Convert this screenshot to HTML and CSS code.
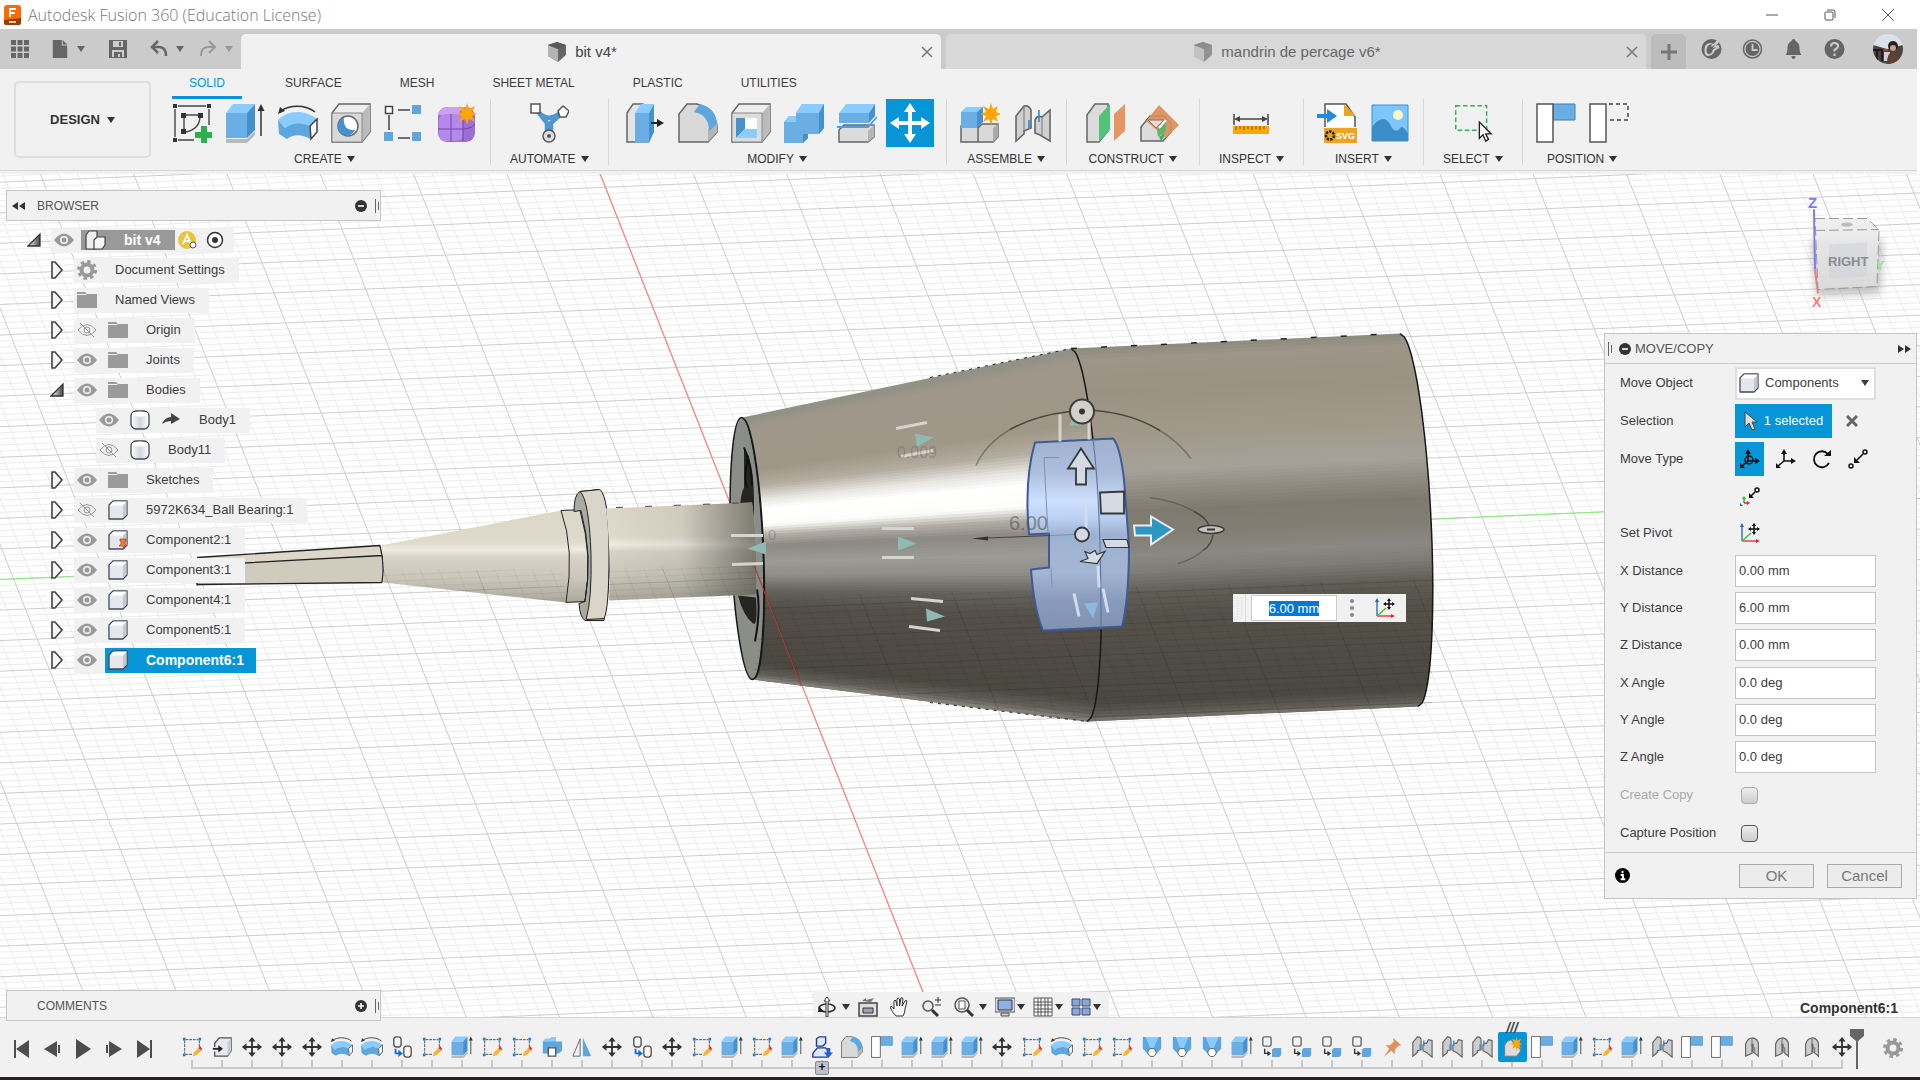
FILE: index.html
```html
<!DOCTYPE html>
<html lang="en">
<head>
<meta charset="utf-8">
<title>Autodesk Fusion 360 (Education License)</title>
<link rel="stylesheet" href="styles.css">
</head>
<body>
<svg class="defs" aria-hidden="true">
  <defs>
    <linearGradient id="g-exp" x1="0" y1="0" x2="1" y2="0"><stop offset=".2" stop-color="#ddd"/><stop offset="1" stop-color="#444"/></linearGradient>
    <linearGradient id="g-cyl" x1="0" y1="0" x2="1" y2="0"><stop offset="0" stop-color="#fff"/><stop offset=".5" stop-color="#d3d5dc"/><stop offset="1" stop-color="#fff"/></linearGradient>
  </defs>
  <symbol id="caret" viewBox="0 0 8 8"><path d="M0 1h8L4 7z" fill="currentColor"/></symbol>
  <symbol id="close" viewBox="0 0 12 12"><path d="M1 1l10 10M11 1L1 11" stroke="currentColor" stroke-width="1.5" fill="none"/></symbol>
  <symbol id="doccube" viewBox="0 0 20 20"><path d="M10 0l9 3v10l-8 7L1 14V3z" fill="#666"/><path d="M1 3l10 4v13L1 14z" fill="#b4b4b4"/><path d="M1 3l9-3 9 3-8 4z" fill="#5a5a5a"/></symbol>

  <symbol id="sketch" viewBox="0 0 40 40"><g fill="none" stroke="#444" stroke-width="1.4"><path d="M6 3h28M3 6v28M37 6v16M6 37h16"/><path d="M14 12h12M12 14v13M28 13c0 8-5 14-14 16"/></g><g fill="#333"><path d="M1 1h4v4H1zM35 1h4v4h-4zM1 35h4v4H1zM9 10h5v5H9zM26 10h5v5h-5zM9 26h5v5H9z"/></g><path d="M29 23h6v6h6v6h-6v6h-6v-6h-6v-6h6z" fill="#2bb14c"/></symbol>
  <symbol id="extrude" viewBox="0 0 40 40"><path d="M1 36h21l8-8v4l-8 8H1z" fill="#b9b9b9"/><path d="M1 10h21v25H1z" fill="#6aaee3"/><path d="M1 10l7-9h22l-8 9z" fill="#8accff"/><path d="M22 10l8-9v26l-8 8z" fill="#4591cf"/><path d="M36 33V6" stroke="#333" stroke-width="1.5"/><path d="M32.500 8L36 1l3.500 7z" fill="#333"/></symbol>
  <symbol id="revolve" viewBox="0 0 40 40"><path d="M3 8c8-6 24-7 34 1" fill="none" stroke="#333" stroke-width="1.600"/><path d="M0 11l2-7 5 4z" fill="#333"/><path d="M0 17c9-10 27-11 39-1l-7 7c-8-4-18-4-25 2z" fill="#8accff"/><path d="M0 17l7 8c7-6 17-6 25-2v13c-8-5-17-5-23 0L1 31z" fill="#5ea6de"/><path d="M32 23l7-7v13l-6 7z" fill="#fff" stroke="#444" stroke-width="1.500"/></symbol>
  <symbol id="hole" viewBox="0 0 40 40"><path d="M1 10L8 1h31v28l-8 10H1z" fill="#eee" stroke="#666" stroke-width="1.500"/><path d="M31 10l8-9v28l-8 10z" fill="#bbb"/><path d="M1 10h30v29H1z" fill="#d9d9d9" stroke="#888"/><circle cx="17" cy="23" r="10" fill="#fff" stroke="#666" stroke-width="1.500"/><path d="M13 15a9 9 0 1 0 11 12c-8 1-12-4-11-12z" fill="#4591cf"/></symbol>
  <symbol id="pattern" viewBox="0 0 40 40"><path d="M14 7h12M5 12v15M14 35h12" stroke="#444" stroke-width="1.500"/><path d="M1.500 3.500h7v7h-7z" fill="#fff" stroke="#444" stroke-width="1.500"/><path d="M28 2h9v9h-9zM28 29h9v9h-9zM0 29h9v9H0z" fill="#5ea6de"/></symbol>
  <symbol id="form" viewBox="0 0 40 40"><rect x="1" y="4" width="37" height="35" rx="9" fill="#9b6fd6"/><path d="M1 12q2-8 11-8h18q-7 1-8 8z" fill="#c9a0f5"/><rect x="2" y="11" width="24" height="27" rx="6" fill="#b588ec"/><path d="M14 11v28M1 26h25q8 0 12-5M26 12v26" stroke="#6f46a8" fill="none"/><path d="M30 0l2 6 6-3-3 6 5 2-5 2 3 6-6-3-2 6-2-6-6 3 3-6-6-2 6-2-3-6 6 3z" fill="#fba50a"/></symbol>
  <symbol id="automate" viewBox="0 0 40 40"><path d="M7 6l11 14v13h4V20L34 9M9 9q11 11 22 1" fill="none" stroke="#4f97d2" stroke-width="4.500"/><path d="M2 1h9v9H2z" fill="#fff" stroke="#555" stroke-width="1.500"/><path d="M34 3l6 5-3 6h-6l-2-6z" fill="#fff" stroke="#555" stroke-width="1.500"/><circle cx="20" cy="33" r="6" fill="#ddd" stroke="#555" stroke-width="1.500"/><circle cx="20" cy="33" r="2" fill="#555"/></symbol>
  <symbol id="presspull" viewBox="0 0 40 40"><path d="M2 10l6-9h10v38H2z" fill="#e4e4e4" stroke="#666" stroke-width="1.500"/><path d="M10 10h14v30H10z" fill="#6aaee3"/><path d="M10 10l6-9h13l-5 9z" fill="#8accff"/><path d="M24 10l5-9v28l-5 11z" fill="#4591cf"/><path d="M26 20h10" stroke="#222" stroke-width="2"/><path d="M32 16l7 4-7 4z" fill="#222"/></symbol>
  <symbol id="fillet" viewBox="0 0 40 40"><path d="M1 39V11L9 1h10q18 6 20 22v6l-9 10z" fill="#d9d9d9" stroke="#666" stroke-width="1.500"/><path d="M30 26l9-9v12l-9 10z" fill="#b5b5b5"/><path d="M16 9l6-8q16 4 17 20l-8 7Q31 12 16 9z" fill="#5ea6de"/></symbol>
  <symbol id="shell" viewBox="0 0 40 40"><path d="M1 10L8 1h31v28l-8 10H1z" fill="#eee" stroke="#666" stroke-width="1.500"/><path d="M31 10l8-9v28l-8 10z" fill="#bbb"/><path d="M1 10h30v29H1z" fill="#dcdcdc" stroke="#888"/><path d="M5 15h21v20H5z" fill="#fff"/><path d="M5 15h9v11l-9 9z" fill="#4591cf"/><path d="M5 35l9-9h12v9z" fill="#8accff"/></symbol>
  <symbol id="combine" viewBox="0 0 40 40"><path d="M12 10l6-9h22v24l-5 6H24v4l-5 5H0V19l5-6h7z" fill="#6aaee3"/><path d="M12 10l6-9h22l-5 9zM0 19l5-6h7v6z" fill="#8accff"/><path d="M35 10l5-9v24l-5 6zM19 40v-9h5v4z" fill="#4591cf"/></symbol>
  <symbol id="split" viewBox="0 0 40 40"><path d="M2 27l5-5h30v12l-6 5H2z" fill="#dcdcdc" stroke="#666" stroke-width="1.500"/><path d="M31 28l6-6v12l-6 5z" fill="#b5b5b5"/><path d="M2 10h30v10H2z" fill="#6aaee3"/><path d="M2 10l7-9h29l-6 9z" fill="#8accff"/><path d="M32 10l6-9v12l-6 7z" fill="#4591cf"/><path d="M0 24h31l9-10" stroke="#4aa0e8" stroke-width="1.800" fill="none"/></symbol>
  <symbol id="movew" viewBox="0 0 48 48"><path d="M24 10v28M10 24h28" stroke="#fff" stroke-width="4"/><path d="M24 4l6 9H18zM24 44l6-9H18zM4 24l9-6v12zM44 24l-9-6v12z" fill="#fff"/></symbol>
  <symbol id="newcomp" viewBox="0 0 40 40"><path d="M1 23h17v16H1zM18 25l4-4h16v13l-5 5H18z" fill="#d9d9d9" stroke="#666" stroke-width="1.500"/><path d="M33 25l5-4v13l-5 5z" fill="#aaa"/><path d="M1 9h16v16H1z" fill="#6aaee3"/><path d="M1 9l5-5h17l-6 5z" fill="#8accff"/><path d="M17 9l6-5v15l-6 6z" fill="#4591cf"/><path d="M31 0l2 6 5-3-2 6 5 2-5 2 2 6-5-3-2 6-2-6-6 3 3-6-6-2 6-2-3-6 6 3z" fill="#fba50a"/></symbol>
  <symbol id="joint" viewBox="0 0 40 40"><path d="M3 13l8-10q5-1 7 4v18l-7 3v3l-8 7zM22 17q2-5 7-3l8-7v31l-10-6-5-2z" fill="#d0d0d0" stroke="#666" stroke-width="1.600"/><path d="M11 3v25M29 14v18" stroke="#777"/><path d="M16 17v9M26 7v12" stroke="#2b8de0" stroke-width="1.600"/></symbol>
  <symbol id="planes" viewBox="0 0 40 40"><path d="M1 12L9 1h13v27l-9 11H1z" fill="#dcdcdc" stroke="#666" stroke-width="1.500"/><path d="M13 13L24 1v26L13 39z" fill="#55c27a"/><path d="M28 11L39 1v27L28 38z" fill="#e59763"/></symbol>
  <symbol id="planeang" viewBox="0 0 40 40"><path d="M2 38V24l9-11h14l7 8v8l-8 9z" fill="#dcdcdc" stroke="#666" stroke-width="1.500"/><path d="M20 2l20 20-13 13L7 18z" fill="#dd8d5b" opacity=".9"/><path d="M9 17h16l-8 8z" fill="#f3d9c8" stroke="#777"/><path d="M18 26l9-10v12l-8 6z" fill="#62b36a"/><path d="M20 25l7-8" stroke="#fff" stroke-width="2"/><path d="M20 34l5-4v4l-3 4z" fill="#3cb55e"/></symbol>
  <symbol id="measure" viewBox="0 0 40 40"><path d="M3 11v11M37 11v11M5 16h30" stroke="#444" stroke-width="1.500"/><path d="M3 16l6-3v6zM37 16l-6-3v6z" fill="#444"/><path d="M2 23h36v8H2z" fill="#fba50a"/><path d="M5 23v4M9 23v3M13 23v4M17 23v3M21 23v4M25 23v3M29 23v4M33 23v3" stroke="#7a5a10"/></symbol>
  <symbol id="image" viewBox="0 0 40 40"><path d="M2 2h36v36H2z" fill="#7cc6fb" stroke="#3a8fd0"/><path d="M2 24q6-8 11-8t9 9q4 6 9-1 4 0 7 7v7H2z" fill="#3b8dc9"/><circle cx="28" cy="12" r="5" fill="#fdf8c0"/></symbol>
  <symbol id="select" viewBox="0 0 44 40"><path d="M3 1h34v27H3z" fill="none" stroke="#2fb15b" stroke-width="1.600" stroke-dasharray="5 3"/><path d="M29 19v18l4-4 3 7 3-2-3-6h6z" fill="#fff" stroke="#222" stroke-width="1.500"/></symbol>
  <symbol id="position" viewBox="0 0 40 40"><path d="M17 1h22v16H17z" fill="#69ade2" stroke="#3f7fb5"/><path d="M1 1h16v38H1z" fill="#fff" stroke="#555" stroke-width="1.500"/></symbol>
  <symbol id="revert" viewBox="0 0 40 40"><path d="M20 1h19v16H20" fill="none" stroke="#444" stroke-width="1.500" stroke-dasharray="4 3"/><path d="M1 1h16v38H1z" fill="#fff" stroke="#555" stroke-width="1.500"/></symbol>

  <symbol id="t-sketch" viewBox="0 0 24 24"><path d="M5 4h14M4 5v14M20 5v9M5 20h8" stroke="#444" fill="none" stroke-dasharray="3 1"/><path d="M2 2h3v3H2zM19 2h3v3h-3zM2 19h3v3H2z" fill="#1b84dd"/><path d="M13 22l1-4 5-5 3 3-5 5z" fill="#f9b633"/><path d="M19 13l2-2 2 3-1 2z" fill="#e33"/></symbol>
  <symbol id="t-import" viewBox="0 0 24 24"><path d="M4 12V8l5-6h13v14l-4 6H4v-5" fill="#e8e9ee" stroke="#555" stroke-width="1.500"/><path d="M18 7l4-5v14l-4 6z" fill="#c9cbd4"/><path d="M2 14h7" stroke="#222" stroke-width="2"/><path d="M8 10l5 4-5 4z" fill="#222"/></symbol>
  <symbol id="t-move" viewBox="0 0 24 24"><path d="M12 4v16M4 12h16" stroke="#333" stroke-width="2"/><path d="M12 1l4 5H8zM12 23l4-5H8zM1 12l5-4v8zM23 12l-5-4v8z" fill="#333"/></symbol>
  <symbol id="t-link" viewBox="0 0 24 24"><rect x="3" y="1" width="8" height="11" rx="3" fill="#f4f4f4" stroke="#555" stroke-width="1.500"/><rect x="14" y="11" width="8" height="12" rx="3" fill="#f4f4f4" stroke="#555" stroke-width="1.500"/><path d="M5 14v5h4" stroke="#1b6fd0" stroke-width="2" fill="none"/><path d="M8 15l5 4-5 4z" fill="#1b6fd0"/></symbol>
  <symbol id="t-mirror" viewBox="0 0 24 24"><path d="M10 3v19H2z" fill="#eee" stroke="#666"/><path d="M13 2v20h9z" fill="#5ea6de"/></symbol>
  <symbol id="t-combine" viewBox="0 0 24 24"><path d="M2 6l3-3h5l2-2h4v5h7v10l-4 3H2z" fill="#5ea6de"/><path d="M2 6l3-3h5l2-2h4v5z" fill="#8accff"/><path d="M8 13h8v9H8z" fill="#fff" stroke="#555" stroke-width="1.500"/></symbol>
  <symbol id="t-insert" viewBox="0 0 24 24"><path d="M6 3l3-2h7v7l-3 3H6zM2 19l5-6h9l5 6-3 4H2z" fill="#dfe6f8" stroke="#1e3e96" stroke-width="1.500"/><path d="M17 13v5h-3l5 6 5-6h-3v-5z" fill="#2a5ed0"/></symbol>
  <symbol id="t-loft" viewBox="0 0 24 24"><path d="M2 1h20v13l-6 6H8l-6-6z" fill="#5ea6de"/><path d="M5 1h14l-5 12h-4z" fill="#8accff"/><circle cx="12" cy="18" r="4.500" fill="#fff" stroke="#555"/></symbol>
  <symbol id="t-comp" viewBox="0 0 24 24"><rect x="2" y="1" width="9" height="10" rx="2" fill="#f4f4f4" stroke="#666" stroke-width="1.500"/><path d="M4 14v5h4" stroke="#333" stroke-width="1.500" fill="none"/><path d="M7 16l4 3-4 3z" fill="#333"/><path d="M12 15l2-2h8v8l-2 2h-8z" fill="#5ea6de"/></symbol>
  <symbol id="t-pin" viewBox="0 0 24 24"><path d="M13 2l9 8-3 1-4 4 0 5-4-4-8 7 6-9-4-4h5l4-4z" fill="#e0905a"/></symbol>
  <symbol id="t-joint" viewBox="0 0 24 24"><path d="M2 22V7l5-6q4 0 4 4v10l-4 1v2zM13 10q1-3 4-2l2-4 4 1v18l-6-5-4-2z" fill="#ccc" stroke="#666" stroke-width="1.300"/><path d="M10 9v6M14 5v6" stroke="#2b8de0" stroke-width="1.500"/></symbol>
  <symbol id="t-rigid" viewBox="0 0 24 24"><path d="M5 22V9q2-7 8-7 5 1 6 6v14l-6-5V9h-1v10z" fill="#ccc" stroke="#666" stroke-width="1.300"/><path d="M12 3v8l3 2v5" stroke="#666" fill="none"/></symbol>
  <symbol id="t-new" viewBox="0 0 24 24"><path d="M4 22V10q2-5 7-6l5 7 5 3v3l-4 5z" fill="#ddd" stroke="#777"/><path d="M17 1l1 4 4-2-2 4 3 2-3 1 2 4-4-2-1 4-1-4-4 2 2-4-4-1 4-2-2-4 4 2z" fill="#fba50a"/></symbol>

  <symbol id="eye" viewBox="0 0 20 20"><path d="M0 10q10-13 20 0-10 13-20 0z" fill="#9a9a9a"/><circle cx="10" cy="10" r="4" fill="#f1f1f1"/><circle cx="10" cy="10" r="2.500" fill="#9a9a9a"/></symbol>
  <symbol id="eyeoff" viewBox="0 0 20 20"><path d="M1 10q9-11 18 0-9 11-18 0z" fill="none" stroke="#999"/><circle cx="10" cy="10" r="3" fill="none" stroke="#999"/><path d="M3 3l14 14" stroke="#999"/></symbol>
  <symbol id="folder" viewBox="0 0 20 20"><path d="M0 2h8l2 2H0zM0 5h9l1-1h10v14H0z" fill="#9a9a9a"/></symbol>
  <symbol id="gear" viewBox="0 0 20 20"><circle cx="10" cy="10" r="8.500" fill="none" stroke="#999" stroke-width="3" stroke-dasharray="3.400 3.275"/><circle cx="10" cy="10" r="5.500" fill="none" stroke="#999" stroke-width="4"/></symbol>
  <symbol id="box" viewBox="0 0 20 20"><path d="M1 5l4-4h14v14l-4 4H1z" fill="#e6e7ec" stroke="#444b58" stroke-width="1.300" stroke-linejoin="round"/><path d="M1.700 5.500h13L19 1.500H5.500z" fill="#fff"/><path d="M15 5.500l3.500-3.500v12.500L15 18z" fill="#c6c8d0"/></symbol>
  <symbol id="assembly" viewBox="0 0 22 20"><path d="M2 5l3-4h8v6l-2 3v9H2z" fill="#eee" stroke="#444" stroke-width="1.200"/><path d="M10 10l3-3h8v8l-3 4h-8z" fill="#f6f6f6" stroke="#444" stroke-width="1.200"/></symbol>
  <symbol id="cyl" viewBox="0 0 20 20"><rect x="1" y="1" width="18" height="18" rx="5" fill="url(#g-cyl)" stroke="#444b58" stroke-width="1.300"/><path d="M2 5q8 3 16 0V3q-8-3-16 0z" fill="#fff"/></symbol>
  <symbol id="expand" viewBox="0 0 14 18"><path d="M2 1v16h3l7-8-7-8z" fill="#f6f6f6" stroke="#444" stroke-width="1.600"/></symbol>
  <symbol id="open" viewBox="0 0 14 18"><path d="M13 3v12H1z" fill="url(#g-exp)" stroke="#333" stroke-width="1.300"/></symbol>
  <symbol id="minus" viewBox="0 0 12 12"><circle cx="6" cy="6" r="6" fill="#333"/><path d="M3 6h6" stroke="#fff" stroke-width="1.600"/></symbol>
  <symbol id="plus" viewBox="0 0 12 12"><circle cx="6" cy="6" r="6" fill="#333"/><path d="M3 6h6M6 3v6" stroke="#fff" stroke-width="1.600"/></symbol>
  <symbol id="rew" viewBox="0 0 14 10"><path d="M7 1v8L1 5zM14 1v8L8 5z" fill="#333"/></symbol>
  <symbol id="ffw" viewBox="0 0 14 10"><path d="M0 1v8l6-4zM7 1v8l6-4z" fill="#333"/></symbol>
  <symbol id="grip" viewBox="0 0 6 14"><path d="M2.500 0v14" stroke="#666"/><path d="M5.500 3v8" stroke="#666"/></symbol>
  <symbol id="pivot" viewBox="0 0 20 20"><path d="M2 18V2" stroke="#1d63b8" stroke-width="1.300"/><path d="M0 4l2-4 2 4z" fill="#1d63b8"/><path d="M2 18h16" stroke="#e22" stroke-width="1.300"/><path d="M16 16l4 2-4 2z" fill="#e22"/><path d="M2 18l9-8" stroke="#3c3" stroke-width="1.500"/><path d="M14 1v10M9 6h10" stroke="#111" stroke-width="1.500"/><path d="M14 0l2 3h-4zM14 12l2-3h-4zM8 6l3-2v4zM20 6l-3-2v4z" fill="#111"/></symbol>
  <symbol id="triad" viewBox="0 0 20 20"><path d="M8 12V3M8 12h9M8 12l-6 5" stroke="#111" stroke-width="1.600"/><path d="M5 5l3-5 3 5zM15 9l5 3-5 3zM0 14v5h5z" fill="#111"/></symbol>
</svg>

<header class="titlebar">
  <svg class="applogo" viewBox="0 0 18 20"><rect width="17" height="20" rx="3" fill="#ff6b00"/><path d="M0 15l17-2v5q0 2-2 2H2q-2 0-2-2z" fill="#9a3c00"/><path d="M6 12V4h6M6 8h5" fill="none" stroke="#fff" stroke-width="2"/><path d="M5 17h7" stroke="#e8c8b0" stroke-width="2"/></svg>
  <h1 class="apptitle">Autodesk Fusion 360 (Education License)</h1>
  <div class="wincontrols">
    <button aria-label="Minimize"><svg viewBox="0 0 12 12"><path d="M0 6h12" stroke="#555"/></svg></button>
    <button aria-label="Restore"><svg viewBox="0 0 12 12"><rect x="1" y="3" width="8" height="8" rx="1" fill="none" stroke="#555"/><path d="M3 1h6q2 0 2 2v6" fill="none" stroke="#555"/></svg></button>
    <button aria-label="Close"><svg viewBox="0 0 12 12"><path d="M0 0l12 12M12 0L0 12" stroke="#555"/></svg></button>
  </div>
</header>

<div class="tabbar">
  <div class="quick">
    <button class="q-grid" aria-label="Data panel"><svg viewBox="0 0 18 18"><path d="M0 0h5v5H0zM6.500 0h5v5h-5zM13 0h5v5h-5zM0 6.500h5v5H0zM6.500 6.500h5v5h-5zM13 6.500h5v5h-5zM0 13h5v5H0zM6.500 13h5v5h-5zM13 13h5v5h-5z" fill="#666"/></svg></button>
    <button class="q-file" aria-label="File"><svg viewBox="0 0 18 20"><path d="M1 0h10v6h6v14H1z" fill="#666"/><path d="M12 0l5 5h-5z" fill="#666"/></svg><svg class="caret"><use href="#caret"/></svg></button>
    <button class="q-save" aria-label="Save"><svg viewBox="0 0 18 18"><path d="M0 0h18v18H0z" fill="#666"/><path d="M4 1h10v6H4zM3 10h12v7H3z" fill="#ccc"/><path d="M10 2h2v4h-2zM5 12h8v5H5z" fill="#666"/><path d="M9 14h2v3H9z" fill="#ccc"/></svg></button>
    <button class="q-undo" aria-label="Undo"><svg viewBox="0 0 18 18"><path d="M2 7h7q7 0 7 9" fill="none" stroke="#666" stroke-width="2.500"/><path d="M8 1L2 7l6 6" fill="none" stroke="#666" stroke-width="2.500"/></svg><svg class="caret"><use href="#caret"/></svg></button>
    <button class="q-redo" aria-label="Redo"><svg viewBox="0 0 18 18"><path d="M16 7H9q-7 0-7 9" fill="none" stroke="#999" stroke-width="2"/><path d="M10 1l6 6-6 6" fill="none" stroke="#999" stroke-width="2"/></svg><svg class="caret"><use href="#caret"/></svg></button>
  </div>
  <div class="doctab active"><span class="doclabel"><svg class="i20"><use href="#doccube"/></svg>bit v4*</span><button aria-label="Close bit v4"><svg><use href="#close"/></svg></button></div>
  <div class="doctab"><span class="doclabel"><svg class="i20"><use href="#doccube"/></svg>mandrin de percage v6*</span><button aria-label="Close mandrin de percage v6"><svg><use href="#close"/></svg></button></div>
  <button class="newtab" aria-label="New design"><svg viewBox="0 0 16 16"><path d="M8 0v16M0 8h16" stroke="#777" stroke-width="3"/></svg></button>
  <div class="account">
    <button aria-label="Extensions"><svg viewBox="0 0 20 20"><circle cx="10" cy="10" r="10" fill="#666"/><path d="M3 13q-1-8 5-9 1 0 4 1l4-4 1 3-3 3 3-1 1 3-4 2-2 3q-2 3-6 3-3-1-3-4z" fill="#ccc"/><path d="M5 12q0-6 5-7v3l4-3-3 4 4-1-4 3q0 3-3 4-3 0-3-3z" fill="#666"/></svg></button>
    <button aria-label="Job status"><svg viewBox="0 0 20 20"><circle cx="10" cy="10" r="9" fill="none" stroke="#666" stroke-width="1.500"/><circle cx="10" cy="10" r="7" fill="#666"/><path d="M10 5v6h5" stroke="#ccc" stroke-width="1.800" fill="none"/></svg></button>
    <button aria-label="Notifications"><svg viewBox="0 0 20 20"><path d="M10 0q2 0 2 2 4 2 4 7 0 5 2 7H2q2-2 2-7 0-5 4-7 0-2 2-2zM8 17h4q0 3-2 3t-2-3z" fill="#666"/></svg></button>
    <button aria-label="Help"><svg viewBox="0 0 20 20"><circle cx="10" cy="10" r="10" fill="#666"/><path d="M6.500 7.500q0-3.500 3.500-3.500t3.500 3q0 2-2 3t-1.500 2.500M10 14.500v2.500" stroke="#ccc" stroke-width="2.200" fill="none"/></svg></button>
    <button class="avatar" aria-label="Profile"><svg viewBox="0 0 30 30"><clipPath id="avc"><circle cx="15" cy="15" r="15"/></clipPath><g clip-path="url(#avc)"><path d="M0 0h30v30H0z" fill="#d9e2ea"/><path d="M0 11l14 4 16-4v19H0z" fill="#4c4340"/><path d="M0 15h13v2H0zM3 15h2v12H3zM8 15h2v12H8z" fill="#1d1a1c"/><path d="M11 18h6v9h-6z" fill="#ccd"/><path d="M10 15h5v2h-5z" fill="#b33"/><circle cx="20" cy="12" r="5" fill="#2b201d"/><circle cx="20" cy="14" r="3" fill="#c9a088"/><path d="M14 30q0-12 6-12 7 0 8 12z" fill="#5b4232"/></g></svg></button>
  </div>
</div>

<section class="ribbon">
  <button class="workspace">DESIGN <svg class="caret"><use href="#caret"/></svg></button>
  <div class="tools">
    <nav class="modes">
      <button class="on">SOLID</button><button>SURFACE</button><button>MESH</button><button>SHEET METAL</button><button>PLASTIC</button><button>UTILITIES</button>
    </nav>
    <div class="groups">
      <div class="group"><div class="icons"><button aria-label="Create sketch"><svg><use href="#sketch"/></svg></button><button aria-label="Extrude"><svg><use href="#extrude"/></svg></button><button aria-label="Revolve"><svg><use href="#revolve"/></svg></button><button aria-label="Hole"><svg><use href="#hole"/></svg></button><button aria-label="Pattern"><svg><use href="#pattern"/></svg></button><button aria-label="Create form"><svg><use href="#form"/></svg></button></div><button class="glabel">CREATE <svg class="caret"><use href="#caret"/></svg></button></div>
      <div class="group"><div class="icons"><button aria-label="Automated modeling"><svg><use href="#automate"/></svg></button></div><button class="glabel">AUTOMATE <svg class="caret"><use href="#caret"/></svg></button></div>
      <div class="group wide"><div class="icons"><button aria-label="Press pull"><svg><use href="#presspull"/></svg></button><button aria-label="Fillet"><svg><use href="#fillet"/></svg></button><button aria-label="Shell"><svg><use href="#shell"/></svg></button><button aria-label="Combine"><svg><use href="#combine"/></svg></button><button aria-label="Split body"><svg><use href="#split"/></svg></button><button class="active" aria-label="Move"><svg><use href="#movew"/></svg></button></div><button class="glabel">MODIFY <svg class="caret"><use href="#caret"/></svg></button></div>
      <div class="group"><div class="icons"><button aria-label="New component"><svg><use href="#newcomp"/></svg></button><button aria-label="Joint"><svg><use href="#joint"/></svg></button></div><button class="glabel">ASSEMBLE <svg class="caret"><use href="#caret"/></svg></button></div>
      <div class="group wide"><div class="icons"><button aria-label="Offset plane"><svg><use href="#planes"/></svg></button><button aria-label="Plane at angle"><svg><use href="#planeang"/></svg></button></div><button class="glabel">CONSTRUCT <svg class="caret"><use href="#caret"/></svg></button></div>
      <div class="group"><div class="icons"><button aria-label="Measure"><svg><use href="#measure"/></svg></button></div><button class="glabel">INSPECT <svg class="caret"><use href="#caret"/></svg></button></div>
      <div class="group"><div class="icons"><button aria-label="Insert SVG"><svg viewBox="0 0 40 40"><path d="M8 24V1h21l9 13v10" fill="#fff" stroke="#555" stroke-width="1.500"/><path d="M27 1v12h12z" fill="#eda51f"/><path d="M7 25h33v15H7z" fill="#eda51f"/><circle cx="13" cy="32.500" r="4" fill="none" stroke="#222" stroke-width="2.500" stroke-dasharray="2.500 1"/><path d="M0 11h10V6l10 7-10 7v-5H0z" fill="#1f8ae0"/><text x="19" y="36" font-family="Liberation Sans" font-size="9" font-weight="700" fill="#fff">SVG</text></svg></button><button aria-label="Insert image"><svg><use href="#image"/></svg></button></div><button class="glabel">INSERT <svg class="caret"><use href="#caret"/></svg></button></div>
      <div class="group"><div class="icons"><button aria-label="Select"><svg><use href="#select"/></svg></button></div><button class="glabel">SELECT <svg class="caret"><use href="#caret"/></svg></button></div>
      <div class="group"><div class="icons"><button aria-label="Capture position"><svg><use href="#position"/></svg></button><button aria-label="Revert position"><svg><use href="#revert"/></svg></button></div><button class="glabel">POSITION <svg class="caret"><use href="#caret"/></svg></button></div>
    </div>
  </div>
</section>

<main class="viewport">
  <svg class="scene" viewBox="0 174 1920 844" preserveAspectRatio="xMidYMid slice" role="img" aria-label="Model view">
    <defs>
      <linearGradient id="ivory" x1="0" y1="0" x2="0" y2="1"><stop offset="0" stop-color="#dcd6c8"/><stop offset=".35" stop-color="#dedacc"/><stop offset=".43" stop-color="#eeece2"/><stop offset=".5" stop-color="#d8d4c7"/><stop offset=".75" stop-color="#c9c6b9"/><stop offset="1" stop-color="#a9a69b"/></linearGradient>
      <linearGradient id="shade" x1="0" y1="0" x2="1" y2="0"><stop offset="0" stop-color="#3c3c34" stop-opacity="0"/><stop offset=".5" stop-color="#3c3c34" stop-opacity=".08"/><stop offset="1" stop-color="#3c3c34" stop-opacity=".6"/></linearGradient>
      <linearGradient id="blue" x1="0" y1="0" x2="0" y2="1"><stop offset="0" stop-color="#a0b3d2"/><stop offset=".18" stop-color="#a8bcdc"/><stop offset=".32" stop-color="#c9deff"/><stop offset=".42" stop-color="#bcd2f6"/><stop offset=".5" stop-color="#9fb4d6"/><stop offset=".7" stop-color="#a4b8d8"/><stop offset=".85" stop-color="#8b9fc2"/><stop offset="1" stop-color="#8496b8"/></linearGradient>
      <linearGradient id="cubeg" x1="0" y1="0" x2="0" y2="1"><stop offset="0" stop-color="#efefef"/><stop offset="1" stop-color="#dcdcdc"/></linearGradient>
      <filter id="soft" x="-30%" y="-30%" width="160%" height="170%"><feGaussianBlur stdDeviation="5"/></filter>
      <clipPath id="lower"><path d="M383 570H562L566 603 383 583zM609 569L764 566V596L609 601zM764 597L1432 580V707L1087 722 753 680z"/></clipPath>
    </defs>
    <g id="grid"></g>
    <path d="M0 580L1920 499" stroke="#8bea7c"/>
    <path d="M600 174L933 1018" stroke="#f58a8a" stroke-width="1.300"/>

    <path d="M197 558L380 546q5 18 2 37L197 586z" fill="#cfcbbd"/>
    <path d="M197 558L380 546 382 556 242 563z" fill="#ddd7c9"/>
    <path d="M197 558L380 546M197 566L382 556M197 585L382 583M197 577v9M380 546q5 18 2 37" fill="none" stroke="#222" stroke-width="1.300"/>
    <path d="M381 546L561 511Q575 550 566 603L383 583q3-19-2-37z" fill="url(#ivory)"/>
    <path d="M561 511l22-1q10 45 2 92l-19 1Q575 550 561 511z" fill="url(#ivory)" stroke="#222"/>
    <path d="M580 492q-6 3-6 20l7-1q12 45 4 91l-6 2q1 14 6 17h19q10-60 3-105-3-24-8-26z" fill="#a9aaa2" stroke="#222"/>
    <path d="M580 492l20-2q9 8 9 65 0 55-5 64l-18 1q6-20 5-65-2-55-11-63z" fill="#dad5c8" stroke="#222"/>
    <path d="M580 511q13 45 5 91" fill="none" stroke="#222"/>
    <ellipse cx="747" cy="549" rx="16" ry="131" transform="rotate(-2.400 747 549)" fill="#8b8e88" stroke="#181818" stroke-width="1.500"/>
    <path d="M744 448q9 10 10 50v50h-14q-2-50 4-60zM738 596l18 2q2 30-3 26-10-8-15-28z" fill="#262420"/>
    <path d="M744 448q8 20 8 38M757 590q4 20-2 52M748 456q-5 30 0 32" fill="none" stroke="#111" stroke-width="2"/>
    <path d="M606 509L752 503q6 40 4 92L609 601q2-50-3-92z" fill="url(#ivory)"/>
    <path d="M606 509L752 503q6 40 4 92L609 601q2-50-3-92z" fill="url(#shade)"/>
    <path d="M616 508l136-5" stroke="#444" stroke-dasharray="7 22"/>
    <g id="cone"></g>
    <g id="barrel"></g>
    <path d="M930 378L1071 349M930 703L1087 722" stroke="#222" stroke-dasharray="3 5" fill="none"/>
    <path d="M1071 349L1400 334" stroke="#222" stroke-width="1.500" stroke-dasharray="6 24"/>
    <g id="overgrid" clip-path="url(#lower)"></g>
    <path d="M754 566L801 686" stroke="#b8362f"/>

    <path d="M1035 443L1113 439Q1120 446 1124 480L1127 520 1129 545Q1129 600 1122 627L1043 631Q1034 610 1031 570L1049 568V534L1029 535Q1024 480 1035 443z" fill="url(#blue)" fill-opacity=".94" stroke="#3f5a94" stroke-width="2" stroke-linejoin="round"/>
    <text x="1009" y="530" font-family="Liberation Sans" font-size="20" fill="#55534d" fill-opacity=".6">6.00</text>
    <path d="M1093 440q8 60 8 190" fill="none" stroke="#5f7196"/>
    <path d="M1059 458h-15l4 76M1051 568l1 20" fill="none" stroke="#7f92b4"/>
    <g stroke="#d6d4ce" stroke-width="3" fill="none">
      <path d="M896 429L927 423M901 457L933 451M882 529h32M882 558h32M911 599L943 602M909 627L940 631M731 536h32M732 565l31-1M1060 415v27M1089 418v22"/>
      <path d="M1074 594L1079 617M1103 589L1108 613M1086 503v28M1098 566l1 22" stroke="#cfdcf2"/>
    </g>
    <g fill="#8fb9b1"><path d="M915 434L934 438 917 447zM898 537L917 544 898 551zM926 609L945 617 927 622zM766 542V555L747 549zM1069 426l6-12 8 12z"/><path d="M1084 604L1098 603 1093 619zM1061 538l12-1-3 5z" fill="#8fb9dc"/></g>
    <g fill="#55534d" font-family="Liberation Sans" opacity=".3"><text x="897" y="458" font-size="16">0.009</text><text x="768" y="540" font-size="15">0</text></g>
    <path d="M975 539L1050 536" stroke="#444"/><path d="M972 539l16-2v4z" fill="#333"/><path d="M1050 536L1075 535" stroke="#7f92b4"/>
    <g fill="none" stroke="#4a473f" stroke-width="1.500"><path d="M1010 430Q1035 416 1070 412M1095 411Q1132 414 1160 431M1194 512Q1206 518 1209 526M1213 535Q1212 545 1203 551"/><path d="M976 466Q986 444 1010 430M1160 431Q1178 442 1191 459M1150 498Q1178 502 1194 512M1203 551Q1193 560 1178 564" opacity=".5"/></g>
    <circle cx="1082" cy="412" r="12" fill="#d2d0c9" stroke="#3c3c3a" stroke-width="2"/><circle cx="1082" cy="412" r="3" fill="#333"/>
    <g fill="#d5dae3" stroke="#34383f" stroke-width="1.800"><path d="M1081 449L1094 469H1086V485H1076V469H1068z"/><path d="M1100 493L1124 492V514H1101z"/><circle cx="1082" cy="535" r="7"/><path d="M1103 540H1127L1129 548H1106zM1080 562L1088 559 1085 552 1090 554 1095 551 1097 555 1105 552 1097 564z" stroke-width="1.200"/></g>
    <path d="M1134 526H1151V517L1173 530 1151 545V536H1135z" fill="#2f95c3" stroke="#e8eef2" stroke-width="2"/>
    <ellipse cx="1211" cy="530" rx="13" ry="4" fill="#c4c2bb" stroke="#3c3c3a" stroke-width="1.500"/><path d="M1207 530h8" stroke="#333" stroke-width="2"/>

    <path d="M1812 240L1882 240 1880 294 1816 296z" fill="#888" opacity=".55" filter="url(#soft)"/>
    <path d="M1814 210L1815 270" stroke="#7a7af5" stroke-width="2"/><path d="M1815 270L1818 294" stroke="#ef7b7b" stroke-width="2"/>
    <path d="M1815 219H1867L1879 230 1877 287 1818 290 1815 231z" fill="url(#cubeg)" opacity=".93"/>
    <path d="M1829 245L1867 243V277L1829 279z" fill="#d0d3d8" opacity=".6"/>
    <path d="M1815 231L1879 230M1815 219H1867L1879 230 1877 287 1818 290 1815 219" fill="none" stroke="#999" stroke-dasharray="10 4"/>
    <ellipse cx="1847" cy="225" rx="6" ry="2" fill="#bbb"/>
    <g font-family="Liberation Sans" font-weight="700"><text x="1828" y="266" font-size="13" fill="#8a8d92">RIGHT</text><text x="1808" y="208" font-size="15" fill="#7a7af5">Z</text><text x="1812" y="307" font-size="14" fill="#f28080">X</text><text x="1876" y="270" font-size="12" fill="#8fe88f">Y</text></g>
  </svg>

  <section class="browser">
    <header class="palette"><svg class="rew"><use href="#rew"/></svg><h2>BROWSER</h2><svg class="i12"><use href="#minus"/></svg><svg class="grip"><use href="#grip"/></svg></header>
    <ul class="tree">
      <li class="root"><svg class="exp"><use href="#open"/></svg><span class="row"><svg class="i20"><use href="#eye"/></svg><b class="rootname"><svg class="i22"><use href="#assembly"/></svg>bit v4</b><svg class="i20" viewBox="0 0 20 20"><circle cx="9" cy="10" r="9" fill="#e8c53c"/><path d="M5 14L9 5l4 9M7 11h4" stroke="#fff" stroke-width="1.800" fill="none"/><circle cx="15" cy="15" r="3" fill="#fff" stroke="#555"/></svg><svg class="i20" viewBox="0 0 20 20"><circle cx="10" cy="10" r="7.500" fill="#fff" stroke="#333" stroke-width="1.500"/><circle cx="10" cy="10" r="3" fill="#333"/></svg></span></li>
      <li><svg class="exp"><use href="#expand"/></svg><span class="row"><svg class="i20"><use href="#gear"/></svg><span class="name">Document Settings</span></span></li>
      <li><svg class="exp"><use href="#expand"/></svg><span class="row"><svg class="i20"><use href="#folder"/></svg><span class="name">Named Views</span></span></li>
      <li><svg class="exp"><use href="#expand"/></svg><span class="row"><svg class="i20"><use href="#eyeoff"/></svg><svg class="i20"><use href="#folder"/></svg><span class="name">Origin</span></span></li>
      <li><svg class="exp"><use href="#expand"/></svg><span class="row"><svg class="i20"><use href="#eye"/></svg><svg class="i20"><use href="#folder"/></svg><span class="name">Joints</span></span></li>
      <li><svg class="exp"><use href="#open"/></svg><span class="row"><svg class="i20"><use href="#eye"/></svg><svg class="i20"><use href="#folder"/></svg><span class="name">Bodies</span></span></li>
      <li class="leaf"><span class="row"><svg class="i20"><use href="#eye"/></svg><svg class="i20"><use href="#cyl"/></svg><svg class="i20" viewBox="0 0 20 20"><path d="M1 14q3-7 9-7V3l9 6-9 5v-3q-5 0-9 3z" fill="#444"/></svg><span class="name">Body1</span></span></li>
      <li class="leaf"><span class="row"><svg class="i20"><use href="#eyeoff"/></svg><svg class="i20"><use href="#cyl"/></svg><span class="name">Body11</span></span></li>
      <li><svg class="exp"><use href="#expand"/></svg><span class="row"><svg class="i20"><use href="#eye"/></svg><svg class="i20"><use href="#folder"/></svg><span class="name">Sketches</span></span></li>
      <li><svg class="exp"><use href="#expand"/></svg><span class="row"><svg class="i20"><use href="#eyeoff"/></svg><svg class="i20"><use href="#box"/></svg><span class="name">5972K634_Ball Bearing:1</span></span></li>
      <li><svg class="exp"><use href="#expand"/></svg><span class="row"><svg class="i20"><use href="#eye"/></svg><svg class="i20" viewBox="0 0 20 20"><use href="#box"/><path d="M12 9h6v2h-1v3l2 2h-3v3l-1-3h-4l2-2v-3h-1z" fill="#f08030" stroke="#a33" stroke-width=".7"/></svg><span class="name">Component2:1</span></span></li>
      <li><svg class="exp"><use href="#expand"/></svg><span class="row"><svg class="i20"><use href="#eye"/></svg><svg class="i20"><use href="#box"/></svg><span class="name">Component3:1</span></span></li>
      <li><svg class="exp"><use href="#expand"/></svg><span class="row"><svg class="i20"><use href="#eye"/></svg><svg class="i20"><use href="#box"/></svg><span class="name">Component4:1</span></span></li>
      <li><svg class="exp"><use href="#expand"/></svg><span class="row"><svg class="i20"><use href="#eye"/></svg><svg class="i20"><use href="#box"/></svg><span class="name">Component5:1</span></span></li>
      <li class="selected"><svg class="exp"><use href="#expand"/></svg><span class="row"><svg class="i20"><use href="#eye"/></svg><span class="pick"><svg class="i20"><use href="#box"/></svg><b class="name">Component6:1</b></span></span></li>
    </ul>
  </section>

  <div class="valuebox">
    <svg class="dots" viewBox="0 0 12 28"><path d="M4 2v24M8 3v24" stroke="#ccc" stroke-dasharray="1 2"/></svg>
    <input id="quickvalue" aria-label="Y distance value" value="6.00 mm">
    <svg class="more" viewBox="0 0 6 18"><g fill="#888"><circle cx="3" cy="2" r="2"/><circle cx="3" cy="9" r="2"/><circle cx="3" cy="16" r="2"/></g></svg>
    <svg class="i20"><use href="#pivot"/></svg>
  </div>

  <form class="dialog">
    <header><svg class="grip"><use href="#grip"/></svg><svg class="i12"><use href="#minus"/></svg><h2>MOVE/COPY</h2><svg class="rew"><use href="#ffw"/></svg></header>
    <div class="fields">
      <div class="field"><label for="obj">Move Object</label><span class="selectwrap"><svg class="i20"><use href="#box"/></svg><select id="obj"><option>Components</option></select><svg class="caret"><use href="#caret"/></svg></span></div>
      <div class="field"><span class="lab">Selection</span><button type="button" class="chosen"><svg viewBox="0 0 14 20"><path d="M1 1v15l4-4 3 7 3-1-3-7h5z" fill="#ddd" stroke="#444"/></svg>1 selected</button><button type="button" class="clear" aria-label="Clear selection"><svg viewBox="0 0 12 12"><path d="M1 1l10 10M11 1L1 11" stroke="#666" stroke-width="3"/></svg></button></div>
      <div class="field types"><span class="lab">Move Type</span><div class="typegrid"><button type="button" class="on" aria-label="Free move"><svg viewBox="0 0 20 20"><use href="#triad"/><circle cx="9" cy="11" r="4" fill="none" stroke="#111" stroke-width="1.500"/></svg></button><button type="button" aria-label="Translate"><svg><use href="#triad"/></svg></button><button type="button" aria-label="Rotate"><svg viewBox="0 0 20 20"><path d="M16 5a8 8 0 1 0 1 9" fill="none" stroke="#111" stroke-width="1.800"/><path d="M12 7h7V1z" fill="#111"/></svg></button><button type="button" aria-label="Point to point"><svg viewBox="0 0 20 20"><path d="M15 5l-6 6" stroke="#111" stroke-width="1.600"/><path d="M6 8v6h6z" fill="#111"/><circle cx="17" cy="3" r="2" fill="none" stroke="#111" stroke-width="1.500"/><circle cx="3" cy="17" r="2" fill="none" stroke="#111" stroke-width="1.500"/></svg></button><button type="button" aria-label="Point to position"><svg viewBox="0 0 20 20"><path d="M15 5l-4 4" stroke="#111" stroke-width="1.600"/><path d="M9 6v5h5z" fill="#111"/><circle cx="17" cy="3" r="2" fill="none" stroke="#111" stroke-width="1.500"/><path d="M4 16v-5" stroke="#2b2" stroke-width="1.500"/><path d="M2 12l2-3 2 3z" fill="#2b2"/><path d="M4 16h4" stroke="#e22" stroke-width="1.500"/><path d="M7 14l3 2-3 2z" fill="#e22"/><path d="M0 16v3h3z" fill="#16c"/></svg></button></div></div>
      <div class="field"><span class="lab">Set Pivot</span><button type="button" class="pivotbtn" aria-label="Set pivot"><svg><use href="#pivot"/></svg></button></div>
      <div class="numbers">
        <div class="field"><label for="xd">X Distance</label><input id="xd" value="0.00 mm"></div>
        <div class="field"><label for="yd">Y Distance</label><input id="yd" value="6.00 mm"></div>
        <div class="field"><label for="zd">Z Distance</label><input id="zd" value="0.00 mm"></div>
      </div>
      <div class="numbers">
        <div class="field"><label for="xa">X Angle</label><input id="xa" value="0.0 deg"></div>
        <div class="field"><label for="ya">Y Angle</label><input id="ya" value="0.0 deg"></div>
        <div class="field"><label for="za">Z Angle</label><input id="za" value="0.0 deg"></div>
      </div>
      <div class="field off"><label for="cc">Create Copy</label><input type="checkbox" id="cc" disabled></div>
      <div class="field"><label for="cp">Capture Position</label><input type="checkbox" id="cp"></div>
    </div>
    <footer><svg class="info" viewBox="0 0 16 16"><circle cx="8" cy="8" r="8" fill="#000"/><path d="M8 3v2.500M6 7.500h2.500V12M6 12h5" stroke="#fff" stroke-width="2" fill="none"/></svg><button type="button">OK</button><button type="button">Cancel</button></footer>
  </form>

  <section class="palette comments"><h2>COMMENTS</h2><svg class="i12"><use href="#plus"/></svg><svg class="grip"><use href="#grip"/></svg></section>

  <div class="navbar">
    <button aria-label="Orbit"><svg viewBox="0 0 20 20"><ellipse cx="10" cy="11" rx="8" ry="4" fill="none" stroke="#333" stroke-width="1.600"/><path d="M10 0l3 4h-2v16H9V4H7z" fill="#fff" stroke="#333"/><path d="M2 9l5 6H1z" fill="#222"/></svg><svg class="caret"><use href="#caret"/></svg></button>
    <button class="solo" aria-label="Look at"><svg viewBox="0 0 20 20"><path d="M1 6h18v13H1z" fill="#ddd" stroke="#444" stroke-width="1.500"/><path d="M5 11h10v5H5z" fill="#9aa3b5" stroke="#333"/><path d="M4 4l4-3v2l8-2-3 4z" fill="#777"/></svg></button>
    <button class="solo" aria-label="Pan"><svg viewBox="0 0 20 20"><path d="M6 19q-4-4-6-9 2-2 4 2L4 4q1-2 2 0l1 5V2q1-2 2.500 0v7L11 1q1.500-1 2 1l-1 7 3-5q1-1 2 0l-2 8q0 4-2 7z" fill="#f8f8f8" stroke="#333"/></svg></button>
    <button class="solo" aria-label="Zoom"><svg viewBox="0 0 20 20"><circle cx="6" cy="9" r="5" fill="#dff0f5" stroke="#555" stroke-width="1.500"/><path d="M10 13l6 6" stroke="#333" stroke-width="3"/><path d="M16 0v6M13 3h6M13 8h6" stroke="#333"/></svg></button>
    <button aria-label="Fit"><svg viewBox="0 0 20 20"><circle cx="8" cy="8" r="7" fill="#eee" stroke="#555" stroke-width="1.500"/><path d="M5 4h6v8H5z" fill="#fff" stroke="#555"/><path d="M13 13l6 6" stroke="#333" stroke-width="3"/></svg><svg class="caret"><use href="#caret"/></svg></button>
    <button class="tight" aria-label="Display settings"><svg viewBox="0 0 20 20"><path d="M0 1h20v14H0z" fill="#ddd" stroke="#555"/><path d="M3 3h14v10H3z" fill="#8fb0e0" stroke="#335"/><path d="M6 16h8v3H6z" fill="#ccc" stroke="#555"/></svg><svg class="caret"><use href="#caret"/></svg></button>
    <button class="tight" aria-label="Grid and snaps"><svg viewBox="0 0 20 20"><path d="M1 1h18v18H1zM5 1v18M8 1v18M12 1v18M15 1v18M1 5h18M1 8h18M1 12h18M1 15h18" fill="#fff" stroke="#555"/></svg><svg class="caret"><use href="#caret"/></svg></button>
    <button class="tight" aria-label="Viewports"><svg viewBox="0 0 20 20"><path d="M1 2h8v7H1zM11 2h8v7h-8zM1 11h8v7H1zM11 11h8v7h-8z" fill="#8ba6d8" stroke="#334a75"/></svg><svg class="caret"><use href="#caret"/></svg></button>
  </div>
  <p class="status">Component6:1</p>
</main>

<footer class="timeline">
  <div class="player">
    <button aria-label="First"><svg viewBox="0 0 20 20"><path d="M4 1v18" stroke="#4d4d4f" stroke-width="2"/><path d="M18 1v18L5 10z" fill="#4d4d4f"/></svg></button>
    <button aria-label="Previous"><svg viewBox="0 0 20 20"><path d="M15 2v16L2 10z" fill="#4d4d4f"/><path d="M17 6v8" stroke="#4d4d4f" stroke-width="2"/></svg></button>
    <button aria-label="Play"><svg viewBox="0 0 20 20"><path d="M3 0v20l15-10z" fill="#4d4d4f"/></svg></button>
    <button aria-label="Next"><svg viewBox="0 0 20 20"><path d="M5 2v16l13-8z" fill="#4d4d4f"/><path d="M3 6v8" stroke="#4d4d4f" stroke-width="2"/></svg></button>
    <button aria-label="Last"><svg viewBox="0 0 20 20"><path d="M16 1v18" stroke="#4d4d4f" stroke-width="2"/><path d="M2 1v18l13-9z" fill="#4d4d4f"/></svg></button>
  </div>
  <ol class="steps" id="steps"></ol>
  <svg class="marker" viewBox="0 0 14 40"><path d="M0 0h14v7L8 12v28H6V12L0 7z" fill="#666"/></svg>
  <button class="settings" aria-label="Timeline settings"><svg><use href="#gear"/></svg></button>
</footer>
<script src="script.js"></script>
</body>
</html>
```
FILE: styles.css
```css
* { box-sizing: border-box; }
body { margin: 0; height: 100vh; display: flex; flex-direction: column; overflow: hidden; background: #fff; color: #3c3c3c; font: 13px/16px "Liberation Sans", Arial, sans-serif; }
button { margin: 0; padding: 0; border: 0; background: none; font: inherit; color: inherit; display: flex; align-items: center; justify-content: center; }
h1, h2, p, ul, ol { margin: 0; padding: 0; font-weight: 400; list-style: none; }
svg { display: block; flex: none; }
.defs { position: absolute; width: 0; height: 0; }
.caret { width: 8px; height: 8px; }
.i20 { width: 20px; height: 20px; }
.i22 { width: 22px; height: 20px; }
.i12 { width: 12px; height: 12px; }
.rew { width: 14px; height: 10px; }
.grip { width: 6px; height: 14px; }

.titlebar { flex: none; height: 29px; display: flex; align-items: center; padding-left: 4px; }
.applogo { width: 18px; height: 20px; }
.apptitle { margin-left: 6px; font: 300 16px/26px "Open Sans", "Noto Sans", sans-serif; color: #777; }
.wincontrols { margin-left: auto; display: flex; padding-right: 3px; }
.wincontrols button { width: 58px; height: 29px; }
.wincontrols svg { width: 12px; height: 12px; }

.tabbar { flex: none; height: 40px; margin-right: 3px; padding-top: 5px; display: flex; background: #cbcbcb; }
.quick { width: 241px; height: 30px; display: flex; align-items: center; padding-left: 11px; color: #666; }
.quick button { gap: 8px; }
.quick svg:first-child { width: 18px; height: 18px; }
.q-file { margin-left: 22px; }
.q-save { margin-left: 24px; }
.q-undo { margin-left: 23px; }
.q-redo { margin-left: 15px; color: #999; }
.doctab { flex: 1; display: flex; align-items: center; margin-right: 5px; background: #d8d8d8; border-radius: 5px 5px 0 0; color: #666; font-size: 15px; }
.doctab.active { background: #f1f1f1; color: #444; }
.doclabel { flex: 1; display: flex; align-items: center; justify-content: center; gap: 8px; padding-left: 10px; }
.doctab .i20 { opacity: 0.6; }
.doctab.active .i20 { opacity: 1; }
.doctab button { width: 28px; height: 28px; color: #777; }
.doctab button svg { width: 12px; height: 12px; }
.newtab { width: 35px; background: #bcbcbc; border-radius: 5px 5px 0 0; }
.newtab svg { width: 16px; height: 16px; }
.account { width: 231px; height: 30px; display: flex; align-items: center; padding-left: 15px; gap: 20px; }
.account svg { width: 21px; height: 20px; }
.account .avatar { margin-left: 8px; }
.avatar svg { width: 30px; height: 30px; }

.ribbon { flex: none; height: 105px; margin-right: 3px; display: flex; background: #f1f1f1; border-bottom: 3px solid #f1f1f1; box-shadow: inset 0 -1px #d5d5d5; }
.workspace { width: 137px; height: 77px; margin: 12px 8px 0 14px; gap: 7px; border: 2px solid #dedede; border-radius: 5px; font-size: 13px; font-weight: 700; color: #333; }
.tools { flex: 1; min-width: 0; }
.modes { display: flex; gap: 28px; padding-left: 13px; }
.modes button { height: 30px; padding: 0 15px; font-size: 12px; border-bottom: 3px solid transparent; }
.modes .on { padding: 0 17px; color: #0696d7; border-color: #0696d7; }
.groups { display: flex; }
.group { padding: 0 9px; border-right: 1px solid #d8d8d8; height: 66px; display: flex; flex-direction: column; align-items: center; }
.group.wide { padding: 0 12px; }
.group:last-child { border: 0; }
.icons { display: flex; gap: 5px; }
.icons button { width: 48px; height: 48px; }
.icons svg { width: 40px; height: 40px; }
.icons .active { background: #0696d7; }
.icons .active svg { width: 48px; height: 48px; }
.glabel { height: 18px; margin-top: 4px; padding: 0 10px; gap: 5px; font-size: 12px; line-height: 16px; color: #333; }

.viewport { flex: 1; min-height: 0; position: relative; z-index: 1; border-bottom: 1px solid #d5d5d5; }
.scene { position: absolute; width: 100%; height: 100%; }
.browser { position: absolute; left: 6px; top: 16px; width: 375px; }
.palette { height: 31px; display: flex; align-items: center; gap: 6px; padding: 0 1px 0 4px; border: 1px solid #c4c4c4; background: #f1f1f1; }
.palette h2 { flex: 1; margin-left: 6px; font-size: 12px; color: #555; }
.tree { padding-top: 4px; }
.tree li { height: 30px; display: flex; align-items: center; padding-left: 44px; gap: 10px; }
.tree .root { padding-left: 21px; }
.tree .leaf { padding-left: 90px; }
.exp { width: 14px; height: 18px; }
.row { height: 25px; display: flex; align-items: center; gap: 11px; padding: 0 14px 0 3px; background: #f1f1f1; }
.name { padding-left: 7px; }
.rootname { height: 20px; display: flex; align-items: center; gap: 18px; padding: 0 14px 0 3px; margin-right: -4px; background: #999; color: #fff; font-size: 14px; }
.root .row { padding-right: 9px; gap: 7px; }
.pick { height: 25px; display: flex; align-items: center; gap: 11px; margin-left: -3px; padding: 0 12px 0 3px; background: #0696d7; color: #fff; font-size: 14px; }
.selected .row { padding-right: 0; }

.valuebox { position: absolute; left: 1233px; top: 420px; width: 173px; height: 28px; display: flex; align-items: center; background: #f1f1f1; }
.dots { width: 12px; height: 28px; margin: 0 5px 0 1px; border-right: 1px solid #ddd; }
.valuebox input { width: 86px; height: 26px; border: 1px solid #ccc; background: #fff; text-align: center; font: inherit; color: #333; outline: 0; }
.valuebox input::selection { background: #0078d7; color: #fff; }
.more { width: 6px; height: 18px; margin: 0 20px 0 12px; }

.dialog { position: absolute; right: 3px; top: 159px; width: 313px; background: #f1f1f1; border: 1px solid #c4c4c4; }
.dialog header { height: 30px; display: flex; align-items: center; padding: 0 4px 0 1px; border-bottom: 1px solid #c9c9c9; }
.dialog header .i12 { margin-left: 7px; }
.dialog h2 { flex: 1; margin-left: 4px; font-size: 13px; color: #555; }
.field { display: flex; align-items: center; height: 38px; padding-left: 15px; }
.field label, .lab { width: 115px; flex: none; }
.numbers { padding-bottom: 1px; }
.numbers .field { height: 37px; }
.numbers input { width: 141px; height: 32px; padding: 0 3px; border: 1px solid #c4c4c4; background: #fff; font: inherit; color: #3c3c3c; }
.selectwrap { position: relative; width: 141px; height: 33px; display: flex; align-items: center; }
.selectwrap select { appearance: none; width: 100%; height: 33px; padding: 0 0 0 28px; border: 2px solid #dedede; background: #fff; font: inherit; color: #3c3c3c; }
.selectwrap .i20 { position: absolute; left: 4px; }
.selectwrap .caret { position: absolute; right: 7px; }
.chosen { width: 97px; height: 34px; gap: 6px; background: #0696d7; color: #fff; }
.chosen svg { width: 14px; height: 20px; }
.clear { margin-left: 14px; }
.clear svg { width: 12px; height: 12px; }
.field.types { height: 74px; align-items: flex-start; }
.types .lab { line-height: 38px; }
.typegrid { display: grid; grid-template-columns: repeat(4, 29px); column-gap: 7px; }
.typegrid button, .pivotbtn { width: 29px; height: 34px; margin: 2px 0; }
.typegrid .on { background: #0696d7; }
.typegrid svg, .pivotbtn svg { width: 20px; height: 20px; }
input[type="checkbox"] { appearance: none; width: 17px; height: 17px; margin: 0 0 0 6px; border: 1px solid #555; border-radius: 4px; background: linear-gradient(#eee, #ccc); }
.field.off { color: #aaa; }
.off input[type="checkbox"] { border-color: #aaa; }
.dialog footer { height: 46px; display: flex; align-items: center; padding: 0 14px 0 10px; gap: 13px; border-top: 1px solid #c9c9c9; }
.info { width: 15px; height: 15px; margin-right: auto; }
.dialog footer button { width: 75px; height: 24px; border: 1px solid #aaa; background: #ececec; font-size: 15px; color: #777; }

.comments { position: absolute; left: 6px; bottom: -4px; width: 375px; }
.comments h2 { margin-left: 26px; }
.navbar { position: absolute; left: 813px; bottom: 0; height: 25px; display: flex; align-items: center; gap: 8px; padding: 4px 8px 0 4px; background: #f1f1f1; color: #333; }
.navbar button { gap: 5px; }
.navbar .tight { gap: 2px; }
.navbar .solo { margin-right: 4px; }
.navbar svg:first-child { width: 20px; height: 20px; }
.status { position: absolute; right: 22px; bottom: 1px; font-size: 14px; font-weight: 700; color: #333; }

.timeline { flex: none; height: 62px; display: flex; background: #f1f1f1; border-bottom: 3px solid #262223; }
.player { width: 177px; height: 62px; display: flex; gap: 11px; padding: 0 0 0 11px; }
.player svg { width: 20px; height: 20px; }
.steps { display: flex; padding-top: 10px; }
.steps li { position: relative; width: 30px; height: 41px; display: flex; flex-direction: column; align-items: center; background: linear-gradient(#c9c9c9, #c9c9c9) center bottom / 30px 2px no-repeat, linear-gradient(#c9c9c9, #c9c9c9) center bottom / 2px 9px no-repeat; }
.steps li:first-child { background-position: 15px bottom, center bottom; }
.steps li:last-child { background-position: -15px bottom, center bottom; }
.steps button { width: 30px; height: 30px; margin-top: 4px; }
.steps svg { width: 22px; height: 22px; }
.steps .current button { width: 29px; background: #0696d7; border-radius: 2px; }
.steps .current::before { content: "///"; position: absolute; top: -6px; font: italic 700 14px/12px "Liberation Sans", sans-serif; color: #444; }
.steps .nested::after { content: "+"; position: absolute; bottom: -6px; width: 12px; height: 12px; border: 1px solid #888; border-radius: 2px; background: #bcc2cd; font: 700 12px/10px "Liberation Sans", sans-serif; text-align: center; color: #111; }
.marker { width: 14px; height: 40px; margin: 11px 0 0 -7px; }
.settings { width: 20px; margin: 0 17px 0 auto; }
.settings svg { width: 20px; height: 20px; }
```
FILE: script.js
```js
const NS = "http://www.w3.org/2000/svg";

function addPath(parent, d, attrs) {
  const p = document.createElementNS(NS, "path");
  p.setAttribute("d", d);
  for (const k in attrs) p.setAttribute(k, attrs[k]);
  parent.appendChild(p);
}

// Ground plane grid: every fifth line is a major one.
function gridPath(major) {
  let d = "";
  for (let k = -75; k <= 90; k++) {
    if ((k % 5 === 0) !== major) continue;
    const x = 600 + 18.66 * k;
    d += `M${x.toFixed(1)} 174L${(x + 333).toFixed(1)} 1018`;
  }
  for (let k = -80; k <= 90; k++) {
    if ((k % 5 === 0) !== major) continue;
    const y = 580 + 6.112 * k;
    d += `M0 ${y.toFixed(1)}L1920 ${(y - 81).toFixed(1)}`;
  }
  return d;
}
const grid = document.getElementById("grid");
addPath(grid, gridPath(false), { stroke: "#ececec", fill: "none" });
addPath(grid, gridPath(true), { stroke: "#cdcdcd", fill: "none" });
const over = document.getElementById("overgrid");
addPath(over, gridPath(false), { stroke: "#000", "stroke-opacity": ".05", fill: "none" });
addPath(over, gridPath(true), { stroke: "#000", "stroke-opacity": ".13", fill: "none" });

// Shaded surface of revolution, drawn as thin bands between two rims.
function mix(stops, t) {
  let i = 1;
  while (i < stops.length - 1 && stops[i][0] < t) i++;
  const [a, ca] = stops[i - 1], [b, cb] = stops[i];
  const f = Math.min(1, Math.max(0, (t - a) / (b - a)));
  const ch = n => [1, 3, 5].map(o => parseInt(n.substr(o, 2), 16));
  const A = ch(ca), B = ch(cb);
  return `rgb(${A.map((v, j) => Math.round(v + (B[j] - v) * f)).join()})`;
}
function rim(r, t) {
  return [
    r.top[0] + (r.bottom[0] - r.top[0]) * t + r.bulge * 2 * Math.sqrt(Math.max(0, t * (1 - t))),
    r.top[1] + (r.bottom[1] - r.top[1]) * t
  ].map(v => v.toFixed(1)).join(" ");
}
const BANDS = 110;
function surface(g, left, right, stops) {
  for (let i = 0; i < BANDS; i++) {
    const a = i / BANDS, m = (i + 1) / BANDS, b = Math.min(1, (i + 2) / BANDS);
    addPath(g, `M${rim(left, a)}L${rim(right, a)}L${rim(right, m)}L${rim(right, b)}L${rim(left, b)}L${rim(left, m)}z`, { fill: mix(stops, (i + .5) / BANDS) });
  }
}
function outline(g, r) {
  let d = "";
  for (let i = 0; i <= BANDS; i++) d += (i ? "L" : "M") + rim(r, i / BANDS);
  addPath(g, d, { fill: "none", stroke: "#181818", "stroke-width": 1.5 });
}
const front = { top: [742, 418], bottom: [753, 680], bulge: 16 };
const middle = { top: [1071, 349], bottom: [1087, 722], bulge: 21 };
const back = { top: [1400, 334], bottom: [1418, 707], bulge: 22 };
const cone = document.getElementById("cone"), barrel = document.getElementById("barrel");
surface(cone, front, middle, [[0, "#8f9084"], [.04, "#9f978a"], [.2, "#9f9787"], [.26, "#b3ada0"], [.31, "#e6e3dd"], [.35, "#ffffff"], [.41, "#fdfdfb"], [.45, "#b0ada5"], [.49, "#8d8982"], [.55, "#9c9b97"], [.6, "#908f8b"], [.66, "#65625b"], [.72, "#54504a"], [.94, "#4b4840"], [.98, "#63615a"], [1, "#8a8880"]]);
surface(barrel, middle, back, [[0, "#8c8a7e"], [.03, "#9d9688"], [.12, "#9a9384"], [.24, "#a19a8b"], [.33, "#a6a299"], [.39, "#8f8b80"], [.44, "#7f7a6f"], [.5, "#827e74"], [.56, "#8a8882"], [.6, "#7f7e78"], [.66, "#605d55"], [.72, "#55524a"], [.95, "#4b4841"], [.985, "#5f5c54"], [1, "#7b7a72"]]);
outline(cone, front);
outline(barrel, middle);
outline(barrel, back);

// Timeline features, in order.
const S = "t-sketch", E = "extrude", M = "t-move", R = "revolve", L = "t-link", P = "position", J = "t-joint", C = "t-comp", F = "t-loft", G = "t-rigid";
const features = [S, "t-import", M, M, M, R, R, L, S, E, S, S, "t-combine", "t-mirror", M, L, M, S, E, S, E, "t-insert", "fillet", P, E, E, E, M, S, R, S, S, F, F, F, E, C, C, C, C, "t-pin", J, J, J, "t-new", P, E, S, E, J, P, P, G, G, G, M];
document.getElementById("steps").innerHTML = features.map(f =>
  `<li class="${f === "t-new" ? "current" : f === "t-insert" ? "nested" : ""}"><button aria-label="Feature"><svg><use href="#${f}"/></svg></button></li>`).join("");

const quick = document.getElementById("quickvalue");
quick.focus();
quick.select();
```
